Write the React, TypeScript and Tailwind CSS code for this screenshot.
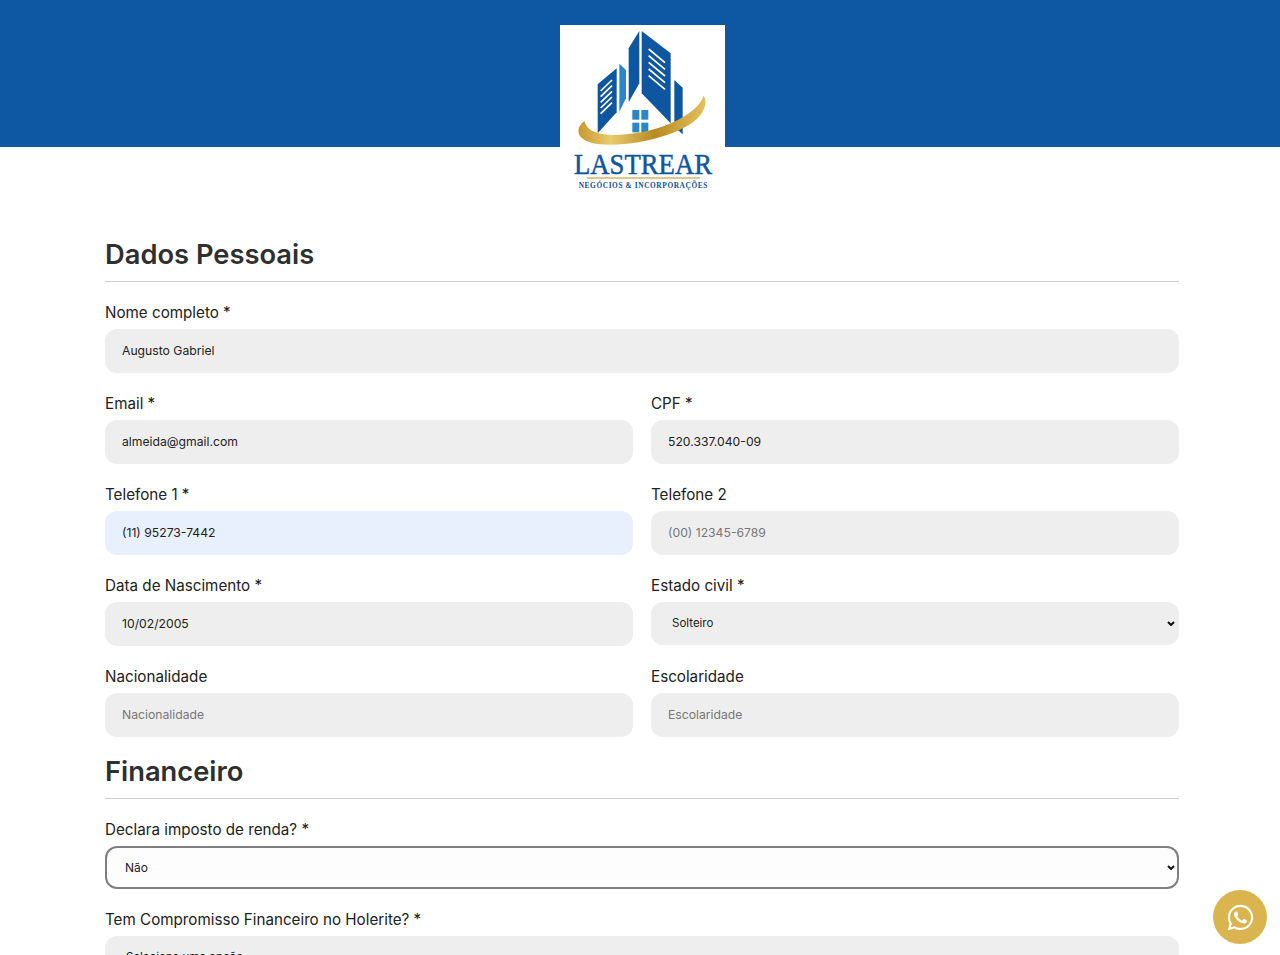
import { FaWhatsapp } from 'react-icons/fa'

function Logo() {
  return (
    <svg viewBox="30 30 495 501" className="w-[165px] h-[167px] shrink-0 ml-[5px] bg-white">
      <defs>
        <linearGradient id="gold" x1="0" y1="0" x2="1" y2="0">
          <stop offset="0" stopColor="#c8982f" />
          <stop offset="0.25" stopColor="#e8cb6c" />
          <stop offset="0.6" stopColor="#b98a22" />
          <stop offset="1" stopColor="#e4c25c" />
        </linearGradient>
      </defs>
      {/* towers */}
      <polygon points="143,208 200,160 200,292 143,355" fill="#0f56a0" />
      <polygon points="208,146 228,165 228,250 208,290" fill="#2a86c8" />
      <polygon points="236,100 268,48 268,205 236,262" fill="#0f56a0" />
      <polygon points="275,48 362,115 362,325 275,235" fill="#0f56a0" />
      <polygon points="373,195 398,218 398,358 373,335" fill="#0f56a0" />
      {/* window stripes */}
      <g stroke="#ffffff" strokeWidth="5" fill="none">
        <path d="M152 228 L186 195" />
        <path d="M152 245 L186 212" />
        <path d="M152 262 L186 229" />
        <path d="M152 279 L186 246" />
        <path d="M152 296 L186 263" />
        <path d="M296 102 L345 143" />
        <path d="M296 122 L345 163" />
        <path d="M296 142 L345 183" />
        <path d="M296 162 L345 203" />
        <path d="M296 182 L345 223" />
      </g>
      {/* house windows */}
      <g fill="#2a86c8">
        <rect x="247" y="285" width="21" height="29" />
        <rect x="274" y="285" width="21" height="29" />
        <rect x="247" y="323" width="21" height="29" />
        <rect x="274" y="323" width="21" height="29" />
      </g>
      {/* swoosh */}
      <path
        d="M104 318 C74 338 74 380 150 388 C260 398 424 352 457 292 C471 266 468 250 460 242 C455 268 410 316 300 346 C220 366 112 370 104 318 Z"
        fill="url(#gold)"
      />
      <text
        x="72"
        y="478"
        fontFamily="'Liberation Serif', serif"
        fontSize="86"
        fill="#0f56a0"
        stroke="#0f56a0"
        strokeWidth="1.5"
        textLength="414"
        lengthAdjust="spacingAndGlyphs"
      >
        LASTREAR
      </text>
      <rect x="110" y="487" width="340" height="4" fill="#d0ab4f" />
      <text
        x="86"
        y="519"
        fontFamily="'Liberation Serif', serif"
        fontSize="22"
        fontWeight="700"
        fill="#0f4f94"
        textLength="386"
        lengthAdjust="spacing"
      >
        NEGÓCIOS & INCORPORAÇÕES
      </text>
    </svg>
  )
}

function Label({ text }: { text: string }) {
  return <label className="block h-[24px] mb-[5px] text-[15.2px] leading-[25px] text-[#222222]">{text}</label>
}

function Field({ label, value, placeholder, filled }: { label: string; value?: string; placeholder?: string; filled?: boolean }) {
  return (
    <div>
      <Label text={label} />
      <input
        readOnly
        value={value ?? ''}
        placeholder={placeholder}
        className={`block w-full h-[44px] rounded-[12px] pl-[17px] pr-[17px] pb-[2px] text-[12.2px] text-[#222222] placeholder:text-[#777777] outline-none ${filled ? 'bg-[#e8f0fe]' : 'bg-[#eeeeee]'}`}
      />
    </div>
  )
}

function Choice({ label, value, focused }: { label: string; value: string; focused?: boolean }) {
  return (
    <div>
      <Label text={label} />
      <div className="relative">
        <select
          defaultValue={value}
          className={
            focused
              ? 'block w-full h-[43px] appearance-none rounded-[12px] pl-[18px] pr-[16px] text-[12px] text-[#222222] bg-[#fdfdfd] border-2 border-[#7f7f7f] outline-none'
              : 'block w-full h-[43px] appearance-none rounded-[12px] pl-[21px] pr-[16px] text-[11.5px] text-[#222222] bg-[#eeeeee] outline-none'
          }
        >
          <option>{value}</option>
        </select>
        {/* native arrow is larger than the reference's */}
        <svg viewBox="0 0 8 5" className="absolute right-[4px] top-[19px] w-[8px] h-[5px] pointer-events-none" fill="none" stroke="#111111" strokeWidth="2">
          <path d="M1 1 L4 4 L7 1" />
        </svg>
      </div>
    </div>
  )
}

function SectionTitle({ children }: { children: string }) {
  return (
    <h2 className="h-[44px] border-b border-[#cccccc] text-[27.3px] leading-[34px] font-semibold text-[#2f2f2f] mb-[18px]">
      {children}
    </h2>
  )
}

export default function App() {
  return (
    <div className="h-screen overflow-hidden bg-white font-['Inter',sans-serif]">
      <header className="h-[147px] bg-[#0d57a3] flex justify-center pt-[25px]">
        <Logo />
      </header>

      <main className="px-[105px] w-[1284px] pt-[91px]">
        <SectionTitle>Dados Pessoais</SectionTitle>
        <div className="grid grid-cols-2 gap-x-[18px] gap-y-[18px] w-[1074px]">
          <div className="col-span-2">
            <Field label="Nome completo *" value="Augusto Gabriel" />
          </div>
          <Field label="Email *" value="almeida@gmail.com" />
          <Field label="CPF *" value="520.337.040-09" />
          <Field label="Telefone 1 *" value="(11) 95273-7442" filled />
          <Field label="Telefone 2" placeholder="(00) 12345-6789" />
          <Field label="Data de Nascimento *" value="10/02/2005" />
          <Choice label="Estado civil *" value="Solteiro" />
          <Field label="Nacionalidade" placeholder="Nacionalidade" />
          <Field label="Escolaridade" placeholder="Escolaridade" />
        </div>

        <div className="mt-[18px]">
          <SectionTitle>Financeiro</SectionTitle>
        </div>
        <div className="flex flex-col gap-[18px] w-[1074px]">
          <Choice label="Declara imposto de renda? *" value="Não" focused />
          <Choice label="Tem Compromisso Financeiro no Holerite? *" value="Selecione uma opção" />
        </div>
      </main>

      <button className="fixed right-[13px] bottom-[11px] w-[54px] h-[54px] rounded-full bg-[#dab54f] flex items-center justify-center text-white">
        <FaWhatsapp className="w-[29px] h-[29px]" />
      </button>
    </div>
  )
}
